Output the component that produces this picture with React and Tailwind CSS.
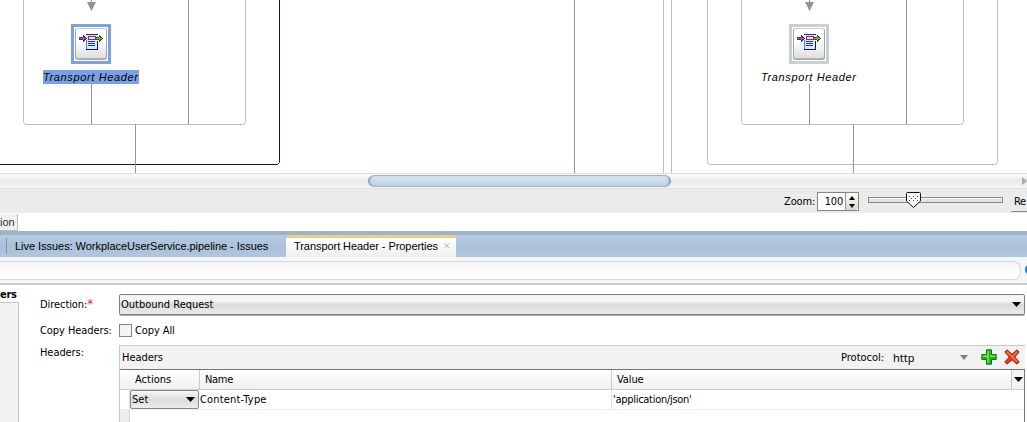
import React from "react";

function TransportGlyph() {
  return (
    <svg width="26" height="18" viewBox="0 0 26 18" shapeRendering="crispEdges">
      <rect x="8" y="1" width="12" height="16" fill="#d6ebfb" />
      <rect x="8" y="1" width="12" height="1" fill="#1c2f86" />
      <rect x="8" y="7" width="1" height="9" fill="#4e7cc9" />
      <rect x="19" y="8" width="1" height="8" fill="#16184f" />
      <rect x="8" y="16" width="12" height="1" fill="#16184f" />
      <path d="M10 8.5H17M10 10.5H17M10 12.5H17" stroke="#1c3a8c" />
      <path d="M1 4H5V2H6V3H7V4H8V5H9V6H8V7H7V8H6V9H5V7H1Z" fill="#3b2a5e" />
      <path d="M1 5H5V4H6V5H8V6H6V7H5V6H1Z" fill="#9a68c2" />
      <path d="M17 4H21V2H22V3H23V4H24V5H25V6H24V7H23V8H22V9H21V7H17Z" fill="#3a4a26" />
      <path d="M18 5H21V4H22V5H24V6H22V7H21V6H18Z" fill="#9bb558" />
      <rect x="10.5" y="3.5" width="7" height="3" fill="#fff" stroke="#c8144c" />
    </svg>
  );
}

function FlowNode({ className, frame, label }) {
  return (
    <div className={`absolute top-[24px] flex w-[120px] flex-col items-center ${className}`}>
      <div className={`flex h-10 w-10 items-center justify-center border-[3px] bg-white ${frame}`}>
        <div className="flex h-8 w-8 justify-center rounded-[3px] border border-[#a4a4a4] border-t-[#cccccc] bg-linear-to-b from-white from-40% to-[#dcdcdc] pt-[4px] shadow-[inset_0_-1px_0_#b5b5b5]">
          <TransportGlyph />
        </div>
      </div>
      <div className={`mt-[6px] h-[14px] w-[96px] whitespace-nowrap font-['Liberation_Sans',sans-serif] text-[11px] italic leading-[14px] tracking-[0.64px] text-black ${label}`}>
        Transport Header
      </div>
    </div>
  );
}

function Canvas() {
  return (
    <div className="relative h-[173px] overflow-hidden bg-white">
      <svg className="absolute left-0 top-0" width="1027" height="173" fill="none">
        <g stroke="#bcbcbc">
          <path d="M23.5 0V121.5Q23.5 124.5 26.5 124.5H242.5Q245.5 124.5 245.5 121.5V0" />
          <path d="M741.5 0V121.5Q741.5 124.5 744.5 124.5H960.5Q963.5 124.5 963.5 121.5V0" />
          <path d="M707.5 0V161.5Q707.5 164.5 710.5 164.5H994.5Q997.5 164.5 997.5 161.5V0" />
          <path d="M663.5 0V173M671.5 0V173" />
        </g>
        <path d="M0 164.5H277.5L279.5 162.5V0" stroke="#17125f" />
        <g stroke="#969696">
          <path d="M91.5 0V4M91.5 84V125M188.5 0V125M135.5 124V173M574.5 0V173" />
          <path d="M809.5 0V4M809.5 84V125M906.5 0V125M853.5 124V173" />
        </g>
        <path d="M87 2H96L91.5 11ZM805 2H814L809.5 11Z" fill="#929292" />
      </svg>
      <FlowNode className="left-[31px]" frame="border-[#7ba0e6]" label="bg-[#7ba0e6]" />
      <FlowNode className="left-[749px]" frame="border-[#c6d0d0]" label="bg-white" />
    </div>
  );
}

function HorizontalScrollbar() {
  return (
    <div className="flex h-[16px] border-y border-[#dde0e3] bg-linear-to-b from-[#fafafa] from-10% via-[#e9e9e9] to-[#f5f5f5] pl-[368px]">
      <div className="mt-px h-[12px] w-[303px] rounded-full border border-[#a3b3c6] border-x-[#8799b0] bg-linear-to-b from-[#d9e5f3] to-[#bed1e5] shadow-[inset_2px_0_2px_-1px_#8fa2ba,inset_-2px_0_2px_-1px_#8fa2ba]" />
      <svg className="ml-auto mt-[3px]" width="5" height="8"><path d="M0 0L5 4L0 8Z" fill="#a9a9a9" /></svg>
    </div>
  );
}

function ZoomBar() {
  return (
    <div className="flex h-[24px] items-start overflow-hidden bg-[#ebebeb] pl-[784px] text-black">
      <span className="mt-[6px] w-[33px] whitespace-nowrap leading-[14px] tracking-[-0.15px]">Zoom:</span>
      <div className="mt-[3px] flex h-[19px] w-[42px] shrink-0 border border-[#858585] bg-white">
        <span className="w-[27px] pr-[2px] text-right leading-[18px] tracking-[-0.2px]">100</span>
        <div className="flex flex-1 flex-col items-center justify-center gap-[4px] rounded-r border-l border-[#999] bg-linear-to-b from-white to-[#d8d8c8]">
          <svg width="6" height="4"><path d="M3 0L6 4H0Z" /></svg>
          <svg width="6" height="4"><path d="M0 0H6L3 4Z" /></svg>
        </div>
      </div>
      <svg className="ml-[9px] mt-[1px] shrink-0" width="136" height="20">
        <rect x=".5" y="7.5" width="134" height="5" fill="#e2e2e2" stroke="#878787" />
        <path d="M2 8.5H134" stroke="#fff" />
        <path d="M38.5 3.5Q38.5 2.5 39.5 2.5H51.5Q52.5 2.5 52.5 3.5V11L45.5 17.5L38.5 11Z" fill="#f5f5f5" stroke="#111" />
        <path d="M41 6.5H51M43 8.5H50M41 10.5H51" stroke="#555" strokeDasharray="1 3" />
      </svg>
      <span className="ml-[7px] h-[23px] flex-1 border-b border-[#8a8a8a] pl-[3px] pt-[6px] leading-[14px] tracking-[-0.3px]">Re</span>
    </div>
  );
}

function ViewTabs() {
  return (
    <div className="flex h-[18px] bg-white font-['Liberation_Sans',sans-serif] text-[11px] text-[#333]">
      <div className="mt-px flex h-[17px] w-[18px] border-b border-r border-[#bebebe] bg-[#efefef] leading-[17px]">
        <span>ion</span>
      </div>
    </div>
  );
}

function PanelTabs() {
  return (
    <div className="flex h-[26px] border-t-4 border-[#9bb4cd] bg-linear-to-b from-[#b8cce0] via-[#a9c1da] to-[#b0c6de] font-['Liberation_Sans',sans-serif] text-[11px] text-black">
      <div className="my-[3px] ml-[6px] w-px bg-[#7b98b2]" />
      <div className="w-[279px] whitespace-nowrap pl-[8px] leading-[22px] tracking-[-0.04px]">Live Issues: WorkplaceUserService.pipeline - Issues</div>
      <div className="flex w-[170px] items-start border-t-[3px] border-[#ebcd86] bg-linear-to-b from-white to-[#efefef] pl-[8px]">
        <span className="w-[150px] whitespace-nowrap leading-[16px] tracking-[-0.06px]">Transport Header - Properties</span>
        <svg className="mt-[5px] shrink-0" width="6" height="6"><path d="M.5 .5L5 5M5 .5L.5 5" stroke="#b0b0b0" /></svg>
      </div>
    </div>
  );
}

function SearchStrip() {
  return (
    <div className="flex h-[28px] items-start overflow-hidden border-b-2 border-[#cbcbcb] bg-[#f4f6f8] pt-[4px]">
      <div className="h-[19px] w-[1021px] shrink-0 rounded-r-[8px] border border-l-0 border-[#d4d8db] bg-linear-to-b from-[#f5f5f5] to-white" />
      <div className="ml-[4px] mt-[3px] h-[11px] w-[11px] shrink-0 rounded-full bg-[#2b7cc4]" />
    </div>
  );
}

function Caret({ color = "#000" }) {
  return <svg width="9" height="5" className="shrink-0"><path d="M0 0H9L4.5 5Z" fill={color} /></svg>;
}

function HeadersTable() {
  return (
    <div className="h-[77px] w-[906px] border-l border-t border-[#c8c8c8]">
      <div className="flex h-[23px] items-center bg-[#f2f2f2] pl-[2px]">
        <span className="w-[719px] pt-px tracking-[-0.05px]">Headers</span>
        <span className="w-[52px] whitespace-nowrap pt-px">Protocol:</span>
        <span className="w-[67px] pt-[2px] font-['Noto_Sans',sans-serif] text-[11px]">http</span>
        <svg width="8" height="5"><path d="M0 0H8L4 5Z" fill="#71839d" /></svg>
        <svg className="mb-[2px] ml-[13px]" width="16" height="16" viewBox="0 0 16 16">
          <path d="M5.5 .8H10.5V5.5H15.2V10.5H10.5V15.2H5.5V10.5H.8V5.5H5.5Z" fill="#25b51b" stroke="#137a12" strokeLinejoin="round" />
          <path d="M7 14V7.2H2M7 7V2M9 7.2H14" stroke="#8cf06f" strokeWidth="1.2" fill="none" />
        </svg>
        <svg className="mb-[2px] ml-[7px]" width="16" height="16" viewBox="0 0 16 16">
          <path d="M3 .8L8 5.3L13 .8L15.2 3L10.8 8L15.2 13L13 15.2L8 10.8L3 15.2L.8 13L5.3 8L.8 3Z" fill="#e93b15" stroke="#942314" strokeLinejoin="round" />
          <path d="M2.7 2.7L8 7.5L12.8 12.5M8 8L13 2.9" stroke="#ff8050" strokeWidth="1.2" fill="none" />
        </svg>
      </div>
      <div className="h-[53px] border-r border-t border-[#747474] bg-white">
        <div className="flex h-[20px] border-b border-[#cfcfcf] bg-linear-to-b from-white to-[#f0f0f0] leading-[19px]">
          <div className="w-[80px] border-r border-[#cbcbcb] pl-[15px]">Actions</div>
          <div className="w-[412px] border-r border-[#cbcbcb] pl-[5px] tracking-[-0.3px]">Name</div>
          <div className="flex-1 pl-[5px] tracking-[-0.1px]">Value</div>
          <div className="flex w-[13px] items-center justify-center border-l border-[#c4c4c4] bg-[#f2f2f2]"><Caret /></div>
        </div>
        <div className="flex h-[20px] border-b border-[#ececec] leading-[20px]">
          <div className="w-[10px] border-r border-[#e0e0e0]" />
          <div className="flex h-[19px] w-[69px] items-center justify-between rounded-[2px] border border-[#888] bg-linear-to-b from-[#f7f7f7] via-[#dcdcdc] to-[#ececec] pl-[1px] pr-[3px]">
            <span className="pt-px">Set</span><Caret />
          </div>
          <div className="w-[413px] border-r border-[#e4e4e4] pl-[1px] tracking-[0.18px]">Content-Type</div>
          <div className="pl-px tracking-[-0.28px]">'application/json'</div>
        </div>
        <div className="h-[12px] w-[10px] border-r border-[#d5d5d5] bg-[#ededed]" />
      </div>
    </div>
  );
}

function PropertiesForm() {
  return (
    <div className="flex h-[137px] bg-white text-black">
      <div className="flex w-[19px] flex-col pt-[3px]">
        <div className="h-[14px] font-bold leading-[14px] tracking-[-0.3px]">ers</div>
        <div className="flex-1 border-r border-t border-[#c6c6c6] bg-[#f2f2f2]" />
      </div>
      <div className="ml-[21px] flex w-[79px] flex-col whitespace-nowrap leading-[14px] tracking-[-0.07px]">
        <div className="mt-[12px] h-[16px]">Direction:<span className="text-[13px] leading-[14px] text-[#e02020]">*</span></div>
        <div className="mt-[11px]">Copy Headers:</div>
        <div className="mt-[8px]">Headers:</div>
      </div>
      <div className="flex flex-col pt-[9px]">
        <div className="flex h-[21px] w-[906px] items-center justify-between rounded-[2px] border border-[#7d7d7d] bg-linear-to-b from-[#f5f5f5] from-30% via-[#dadada] via-50% to-[#ebebeb] pl-[1px] pr-[3px] shadow-[0_1px_0_#aaa]">
          <span className="pt-[2px]">Outbound Request</span><Caret />
        </div>
        <div className="mt-[8px] flex h-[15px] items-center">
          <div className="h-[13px] w-[13px] border border-[#858585] bg-[#f4f4f4]" />
          <span className="ml-[3px] pt-px tracking-[-0.1px]">Copy All</span>
        </div>
        <div className="mt-[7px]"><HeadersTable /></div>
      </div>
    </div>
  );
}

export default function App() {
  return (
    <div className="flex h-[422px] w-[1027px] flex-col overflow-hidden bg-white font-['DejaVu_Sans_Condensed','DejaVu_Sans',sans-serif] text-[11px] [&>*]:shrink-0">
      <Canvas />
      <HorizontalScrollbar />
      <ZoomBar />
      <ViewTabs />
      <PanelTabs />
      <SearchStrip />
      <PropertiesForm />
    </div>
  );
}
